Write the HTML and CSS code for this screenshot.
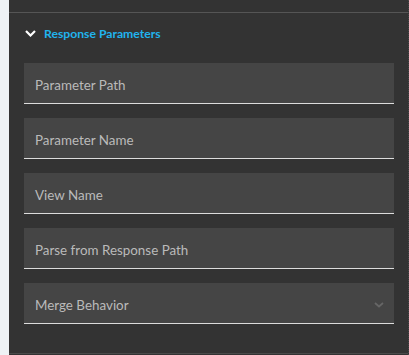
FILE: index.html
```html
<!DOCTYPE html>
<html>
<head>
<meta charset="utf-8">
<link rel="stylesheet" href="styles.css">
</head>
<body>
<div class="page">
  <div class="strip"></div>
  <div class="panel">
    <div class="section">
      <div class="section-header">
        <svg class="chev" width="11" height="7" viewBox="0 0 11 7"><path d="M1 1 L5.5 5.5 L10 1" fill="none" stroke="#ffffff" stroke-width="2.2"/></svg>
        <span class="section-title">Response Parameters</span>
      </div>
      <div class="fields">
        <div class="field"><span class="label">Parameter Path</span></div>
        <div class="field"><span class="label">Parameter Name</span></div>
        <div class="field"><span class="label">View Name</span></div>
        <div class="field"><span class="label">Parse from Response Path</span></div>
        <div class="field select"><span class="label">Merge Behavior</span>
          <svg class="sel-chev" width="10" height="6" viewBox="0 0 10 6"><path d="M1 1 L5 4.5 L9 1" fill="none" stroke="#666666" stroke-width="1.8"/></svg>
        </div>
      </div>
    </div>
  </div>
</div>
</body>
</html>
```

FILE: styles.css
```css
html, body {
  margin: 0;
  padding: 0;
  background: #333333;
}
body {
  font-family: Lato, "Open Sans", sans-serif;
  width: 409px;
  height: 355px;
  overflow: hidden;
}
.page {
  display: flex;
  height: 355px;
}
.strip {
  width: 9px;
  background: #eef2f5;
  flex: none;
}
.panel {
  flex: 1;
  background: #333333;
  padding-top: 12px;
  border-right: 1px dotted #4a4a4a;
}
.section {
  border-top: 1px solid #555555;
  border-bottom: 1px solid #4a4a4a;
  padding: 0 14px 29px 15px;
}
.section-header {
  height: 40px;
  display: flex;
  align-items: center;
  padding-left: 1px;
  box-sizing: border-box;
  padding-top: 1px;
}
.chev {
  display: block;
  margin-right: 8px;
}
.section-title {
  color: #21b4ee;
  font-weight: 700;
  font-size: 12.2px;
}
.fields {
  margin-top: 10px;
  display: flex;
  flex-direction: column;
  gap: 14px;
}
.field {
  background: #454545;
  border-bottom: 1px solid #dcdcdc;
  display: flex;
  align-items: center;
  padding: 3px 10px 0 11px;
  box-sizing: content-box;
  height: 37px;
}
.label {
  color: #bababa;
  font-size: 13.4px;
  flex: 1;
}
.sel-chev {
  display: block;
  margin-right: 0;
}
```
